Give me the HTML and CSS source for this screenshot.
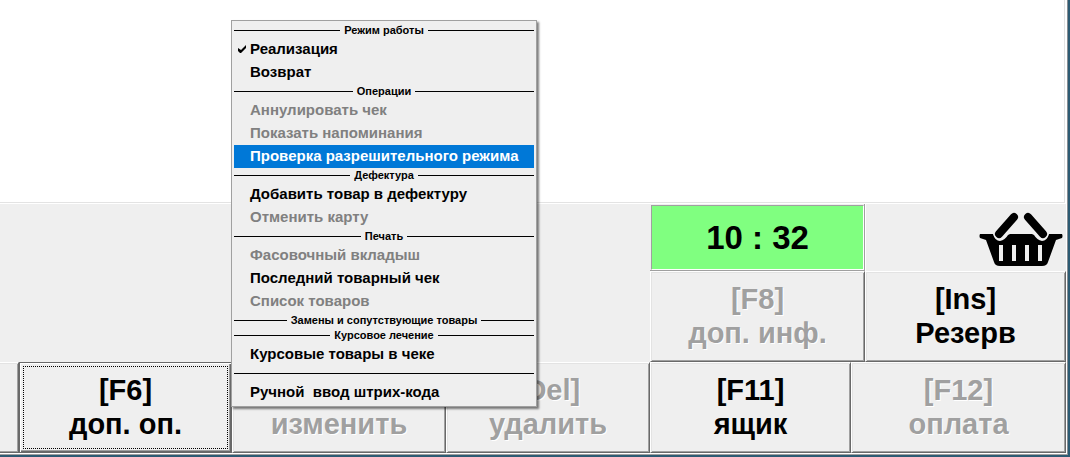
FILE: index.html
```html
<!DOCTYPE html>
<html lang="ru">
<head>
    <meta charset="UTF-8">
    <meta name="viewport" content="width=device-width, initial-scale=1.0">
    <title>Касса</title>
    <link rel="stylesheet" href="styles.css">
</head>
<body>
    <div class="desktop">
        <div class="window">
            <!-- Receipt area -->
            <div class="receipt"></div>

            <!-- Clock, basket and upper buttons -->
            <div class="upper">
                <div class="blank"></div>
                <div class="side">
                    <div class="clock-cell"><div class="clock">10 : 32</div></div>
                    <button class="key" disabled>[F8]<br>доп. инф.</button>
                </div>
                <div class="side">
                    <div class="basket">
                        <svg width="84" height="54" viewBox="0 0 84 54">
                            <path d="M1 21H14Q16 28 21 28Q26 27 29 22L31 21H53L55 22Q58 27 63 28Q68 28 70 21H83Q84 23 83 25L77 27L69 49Q68 53 63 53H21Q16 53 15 49L7 27L1 25Q0 23 1 21Z" fill="#000"/>
                            <path d="M20 21L35 4M64 21L49 4" stroke="#efefef" stroke-width="11" stroke-linecap="round"/>
                            <path d="M20 21L35 4M64 21L49 4" stroke="#000" stroke-width="8" stroke-linecap="round"/>
                            <path d="M20 32h4v16h-4zM33 32h4v16h-4zM46 32h4v16h-4zM59 32h4v16h-4z" fill="#efefef"/>
                        </svg>
                    </div>
                    <button class="key">[Ins]<br>Резерв</button>
                </div>
            </div>

            <!-- Bottom buttons -->
            <div class="bottom">
                <button class="key cut" aria-label="Назад"></button>
                <button class="key current">[F6]<br>доп. оп.</button>
                <button class="key" disabled>&nbsp;<br>изменить</button>
                <button class="key" disabled>[Del]<br>удалить</button>
                <button class="key">[F11]<br>ящик</button>
                <button class="key" disabled>[F12]<br>оплата</button>
            </div>
        </div>
    </div>

    <!-- Popup menu of the F6 button -->
    <div class="menu">
        <div class="menu-title">Режим работы</div>
        <button class="menu-item">
            <svg class="check" width="8" height="8" viewBox="0 0 8 8"><path d="M0 3V6L2 8H3L8 3V0L3 5Z" fill="#000"/></svg>Реализация
        </button>
        <button class="menu-item">Возврат</button>
        <div class="menu-title">Операции</div>
        <button class="menu-item" disabled>Аннулировать чек</button>
        <button class="menu-item" disabled>Показать напоминания</button>
        <button class="menu-item selected">Проверка разрешительного режима</button>
        <div class="menu-title">Дефектура</div>
        <button class="menu-item">Добавить товар в дефектуру</button>
        <button class="menu-item" disabled>Отменить карту</button>
        <div class="menu-title">Печать</div>
        <button class="menu-item" disabled>Фасовочный вкладыш</button>
        <button class="menu-item">Последний товарный чек</button>
        <button class="menu-item" disabled>Список товаров</button>
        <div class="menu-title">Замены и сопутствующие товары</div>
        <div class="menu-title">Курсовое лечение</div>
        <button class="menu-item">Курсовые товары в чеке</button>
        <div class="menu-line"></div>
        <button class="menu-item">Ручной&nbsp; ввод штрих-кода</button>
    </div>
</body>
</html>
```

FILE: styles.css
```css
* {
    box-sizing: border-box;
}

body {
    margin: 0;
    font-family: "Liberation Sans", Arial, sans-serif;
    font-weight: bold;
    color: #000000;
}

.desktop {
    height: 100vh;
    padding: 0 2px 2px 0;
    background-color: #2d5b73;
}

.window {
    height: 100%;
    display: flex;
    flex-direction: column;
    padding: 0 1px 1px 0;
    background-color: #ffffff;
    border-right: 1px solid #8a8f94;
    border-bottom: 1px solid #a0a0a0;
}

.receipt {
    flex: 1;
    margin-right: 1px;
    background-color: #ffffff;
    border-right: 1px solid #e3e3e3;
    border-bottom: 1px solid #e3e3e3;
}

.upper {
    display: grid;
    grid-template-columns: 650fr 215fr 201fr;
    margin-top: 1px;
    background-color: #efefef;
}

.side {
    display: flex;
    flex-direction: column;
}

.clock-cell {
    height: 67px;
    padding: 1px 0 0 1px;
    border-right: 1px solid #a0a0a0;
    border-bottom: 1px solid #a0a0a0;
}

.clock {
    height: 100%;
    display: flex;
    align-items: center;
    justify-content: center;
    background-color: #80ff80;
    border: 1px solid;
    border-color: #a0a0a0 #ffffff #ffffff #a0a0a0;
    font-size: 33px;
}

.basket {
    height: 67px;
    display: flex;
    align-items: center;
    justify-content: flex-end;
    padding: 5px 3px 0 0;
    border-left: 1px solid #ffffff;
}

.basket svg {
    overflow: visible;
}

/* Raised buttons with two-tone edges */
.key {
    min-width: 0;
    height: 91px;
    margin: 0;
    padding: 0 0 2px 0;
    background-color: #efefef;
    border: 1px solid;
    border-color: #ffffff #696969 #696969 #ffffff;
    box-shadow: inset 1px 1px #e3e3e3, inset -1px -1px #a0a0a0;
    font: bold 29px/34px "Liberation Sans", Arial, sans-serif;
    color: #000000;
    white-space: nowrap;
    overflow: hidden;
}

.key:disabled {
    color: #a0a0a0;
    text-shadow: 1px 1px #ffffff;
}

.key.current {
    border-color: #696969;
    box-shadow: inset 1px 1px #ffffff, inset -1px -1px #696969, inset -2px -2px #a0a0a0;
    outline: 1px dotted #000000;
    outline-offset: -5px;
}

/* Continues past the left edge of the window */
.key.cut {
    border-left: none;
    box-shadow: inset 0 1px #e3e3e3, inset -1px -1px #a0a0a0;
}

.bottom {
    display: grid;
    grid-template-columns: 19fr 213fr 214fr 204fr 201fr 215fr;
    background-color: #efefef;
}

/* Popup menu */
.menu {
    position: absolute;
    left: 231px;
    top: 20px;
    width: 306px;
    padding: 2px;
    background-color: #efefef;
    border: 1px solid #a0a0a0;
    box-shadow: 2px 2px 2px rgba(0, 0, 0, 0.5);
}

.menu-title {
    display: flex;
    align-items: center;
    gap: 4px;
    font-size: 11px;
    line-height: 15px;
}

.menu-title::before,
.menu-title::after {
    content: "";
    flex: 1;
    height: 1px;
    background-color: #000000;
}

.menu-item {
    display: flex;
    align-items: center;
    width: 100%;
    height: 23px;
    padding: 0 0 2px 16px;
    background: none;
    border: none;
    font: bold 15px/21px "Liberation Sans", Arial, sans-serif;
    color: #000000;
    white-space: nowrap;
}

.menu-item:disabled {
    color: #808080;
}

.menu-item.selected {
    background-color: #0078d7;
    color: #ffffff;
}

.check {
    margin-left: -12px;
    margin-right: 4px;
}

.menu-line {
    height: 1px;
    margin: 7px 0;
    background-color: #000000;
}
```
